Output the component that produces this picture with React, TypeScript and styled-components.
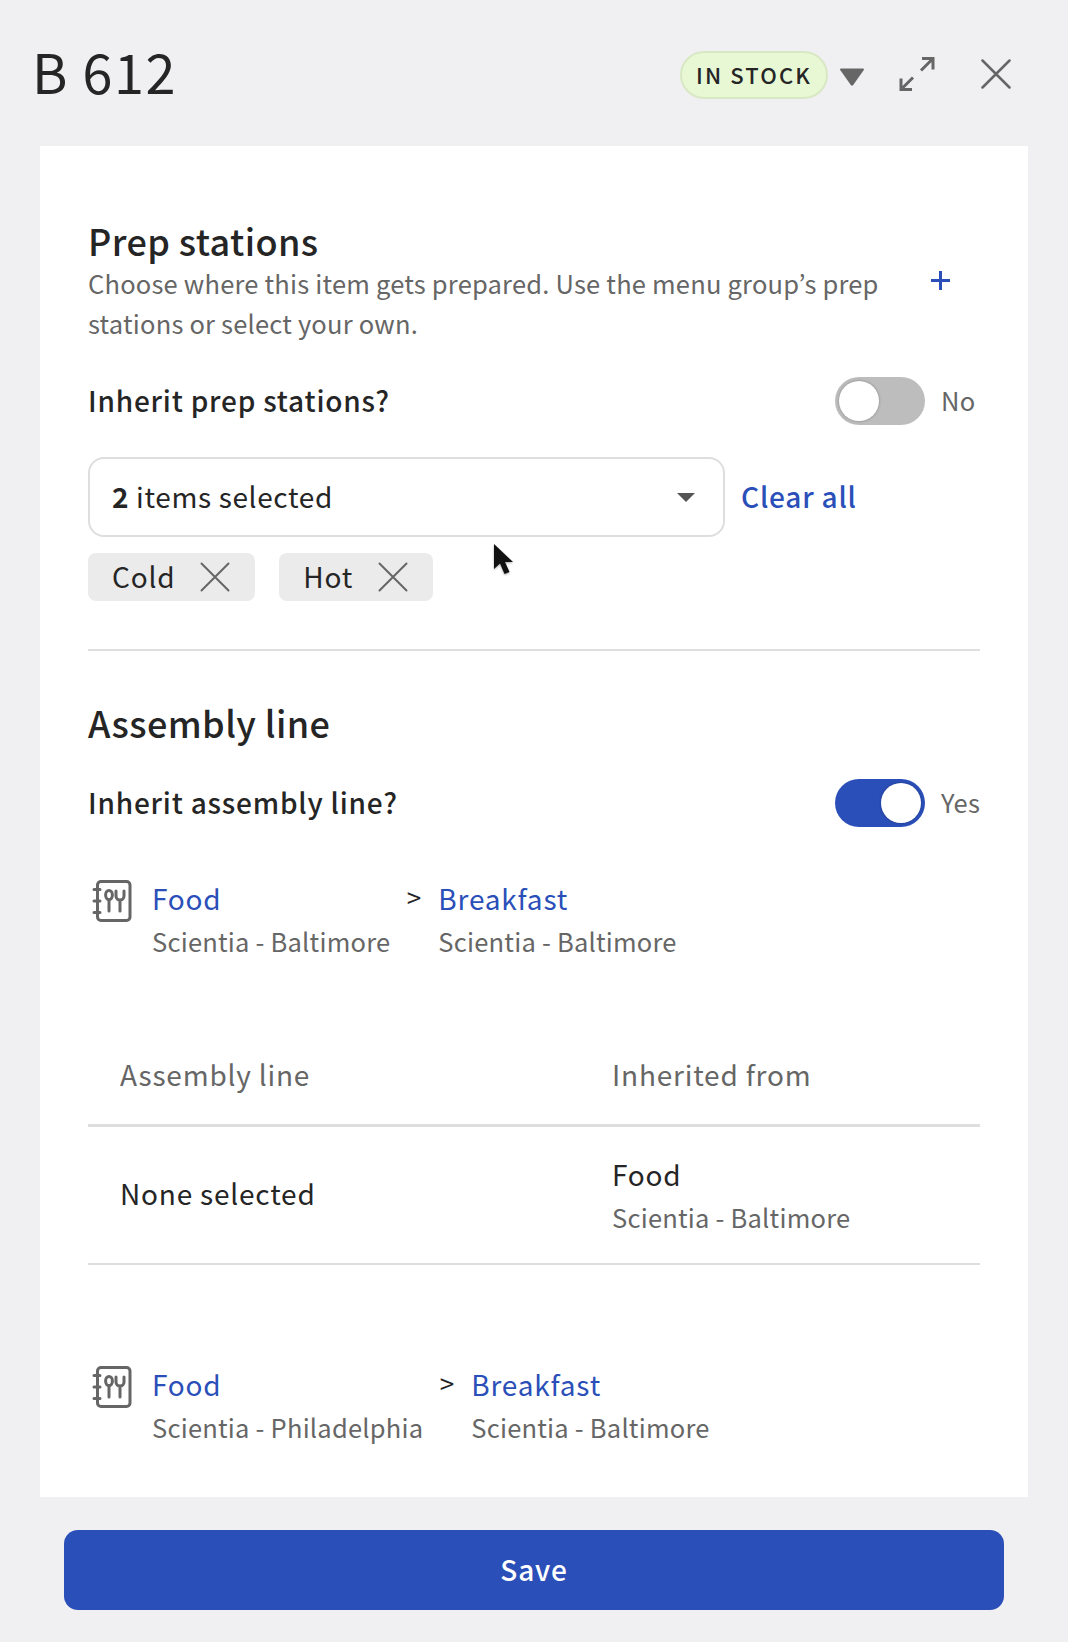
import React from 'react'
import styled, { createGlobalStyle } from 'styled-components'

const GlobalStyle = createGlobalStyle`
  html, body {
    margin: 0;
    padding: 0;
    background: #f0f0f2;
  }
  * {
    box-sizing: border-box;
  }
  body {
    font-family: "Noto Sans CJK JP", "Noto Sans", sans-serif;
    color: #252525;
    font-size: 28px;
    line-height: 40px;
    letter-spacing: 0.8px;
  }
`

const Page = styled.div`
  position: relative;
  width: 1068px;
  height: 1642px;
  display: flex;
  flex-direction: column;
  overflow: hidden;
`
const Header = styled.header`
  height: 146px;
  display: flex;
  align-items: center;
  padding: 2px 57px 0 32px;
`
const Title = styled.h1`
  flex: 1;
  margin: -7px 0 0;
  font-size: 54px;
  line-height: 60px;
  font-weight: 400;
  letter-spacing: 1.5px;
`
const StockBadge = styled.div`
  width: 148px;
  height: 48px;
  margin: 2px 0 0 1px;
  padding-bottom: 2px;
  display: flex;
  align-items: center;
  justify-content: center;
  border: 2px solid #d9e8c4;
  border-radius: 24px;
  background: #e8f7d4;
  font-size: 22px;
  font-weight: 500;
  letter-spacing: 2.1px;
`
const IconButton = styled.span<{ $gap: number; $top?: number }>`
  display: flex;
  align-items: center;
  justify-content: center;
  margin: ${(p) => p.$top ?? 0}px 0 0 ${(p) => p.$gap}px;
  color: #666;
`
const Panel = styled.main`
  width: 988px;
  height: 1351px;
  margin: 0 40px;
  padding: 68px 48px 0;
  background: #fff;
`
const SectionTitle = styled.h2<{ $top?: number }>`
  margin: ${(p) => p.$top ?? 0}px 0 0;
  font-size: 36px;
  line-height: 52px;
  font-weight: 500;
  letter-spacing: 0.4px;
`
const DescRow = styled.div`
  display: flex;
  justify-content: space-between;
  width: 892px;
  margin-top: -3px;
`
const Description = styled.p`
  margin: 0;
  width: 800px;
  color: #666;
  font-size: 25.5px;
  letter-spacing: 0.2px;
`
const PlusIcon = styled.span`
  display: flex;
  margin: 8px 30px 0 0;
  color: #2b4fb9;
`
const ToggleRow = styled.div<{ $top: number }>`
  display: flex;
  align-items: center;
  height: 48px;
  margin-top: ${(p) => p.$top}px;
`
const ToggleLabel = styled.div`
  flex: 1;
  font-weight: 500;
`
const Toggle = styled.div<{ $on: boolean }>`
  width: 90px;
  height: 48px;
  margin-top: 2px;
  padding: 4px;
  display: flex;
  justify-content: ${(p) => (p.$on ? 'flex-end' : 'flex-start')};
  border-radius: 24px;
  background: ${(p) => (p.$on ? '#2b4fb9' : '#bdbdbd')};
`
const Knob = styled.div`
  width: 40px;
  height: 40px;
  border-radius: 50%;
  background: #fff;
  box-shadow: 0 0 3px rgba(0, 0, 0, 0.3);
`
const ToggleValue = styled.div`
  width: 55px;
  padding-left: 16px;
  color: #666;
  font-size: 25.5px;
  letter-spacing: 0.2px;
  white-space: nowrap;
`
const SelectRow = styled.div`
  display: flex;
  align-items: center;
  margin-top: 33px;
`
const Select = styled.div`
  width: 637px;
  height: 80px;
  padding: 0 28px 0 22px;
  display: flex;
  align-items: center;
  justify-content: space-between;
  border: 2px solid #dedede;
  border-radius: 16px;
  letter-spacing: 0.65px;
`
const SelectText = styled.span`
  margin-top: -2px;
`
const SelectCount = styled.b`
  font-weight: 700;
`
const Caret = styled.span`
  width: 0;
  height: 0;
  border-left: 9px solid transparent;
  border-right: 9px solid transparent;
  border-top: 9px solid #555;
`
const ClearAll = styled.a`
  margin: -2px 0 0 16px;
  color: #2b4fb9;
  font-weight: 500;
`
const ChipRow = styled.div`
  display: flex;
  gap: 24px;
  margin-top: 16px;
`
const Chip = styled.div`
  height: 48px;
  display: flex;
  align-items: center;
  gap: 25px;
  padding: 0 25px 0 24px;
  border-radius: 8px;
  background: #ebebeb;
`
const ChipText = styled.span`
  margin-top: -2px;
`
const ChipClose = styled.span`
  display: flex;
  color: #666;
`
const Divider = styled.hr`
  height: 2px;
  margin: 48px 0 0;
  border: 0;
  background: #dedede;
`
const Crumbs = styled.div<{ $top: number }>`
  display: flex;
  align-items: flex-start;
  height: 88px;
  margin-top: ${(p) => p.$top}px;
`
const BookIcon = styled.span`
  display: flex;
  width: 64px;
  padding: 1px 0 0 3px;
  color: #666;
`
const Crumb = styled.div`
  display: flex;
  flex-direction: column;
  gap: 3px;
`
const CrumbLink = styled.a`
  color: #2b4fb9;
`
const SubText = styled.div`
  color: #666;
  font-size: 25.5px;
  letter-spacing: 0.22px;
`
const Chevron = styled.span`
  width: 48px;
  text-align: center;
  font-size: 26px;
  line-height: 38px;
`
const TableGrid = styled.div`
  display: grid;
  grid-template-columns: 492px 1fr;
  padding-left: 32px;
  align-items: center;
`
const TableHead = styled(TableGrid)`
  height: 90px;
  margin-top: 71px;
  border-bottom: 3px solid #dedede;
  padding-bottom: 14px;
  color: #666;
`
const TableRow = styled(TableGrid)`
  height: 138px;
  border-bottom: 2px solid #dedede;
`
const RowLabel = styled.span`
  margin-top: -5px;
`
const SaveBar = styled.div`
  flex: 1;
  padding: 33px 64px 0;
`
const SaveButton = styled.button`
  width: 940px;
  height: 80px;
  padding: 0 0 2px;
  border: 0;
  border-radius: 14px;
  background: #2b4fb9;
  color: #fff;
  font: inherit;
  font-weight: 500;
  letter-spacing: 0.8px;
`
const CursorMark = styled.svg`
  position: absolute;
  left: 493px;
  top: 541px;
  filter: drop-shadow(0 1px 1px rgba(0, 0, 0, 0.35));
`

const CloseGlyph = ({ size, stroke = 2.5 }: { size: number; stroke?: number }) => (
  <svg width={size} height={size} viewBox="0 0 30 30" fill="none" stroke="currentColor" strokeWidth={stroke} strokeLinecap="round">
    <path d="M1.5 1.5 28.5 28.5M28.5 1.5 1.5 28.5" />
  </svg>
)

const MenuBook = () => (
  <svg width="42" height="44" viewBox="0 0 42 44" fill="none" stroke="currentColor" strokeWidth="3" strokeLinecap="round" strokeLinejoin="round">
    <rect x="6.5" y="2.5" width="32.5" height="39" rx="3.5" />
    <path d="M3 10.5h6M3 22h6M3 33.5h6" />
    <ellipse cx="18" cy="16" rx="3.4" ry="4.6" />
    <path d="M18 21v11" />
    <path d="M25 12v5a4 4 0 0 0 8 0v-5M29 21v11" />
  </svg>
)

const App = () => (
  <Page>
    <GlobalStyle />
    <Header>
      <Title>B 612</Title>
      <StockBadge>IN STOCK</StockBadge>
      <IconButton $gap={11} $top={5}>
        <svg width="26" height="20" viewBox="0 0 26 20" fill="#666">
          <path d="M2 1.5h22a1 1 0 0 1 .8 1.6L14.2 18a1.5 1.5 0 0 1-2.4 0L1.2 3.1A1 1 0 0 1 2 1.5Z" />
        </svg>
      </IconButton>
      <IconButton $gap={34}>
        <svg width="36" height="36" viewBox="0 0 36 36" fill="none" stroke="currentColor" strokeWidth="3">
          <path d="M23 2.5h11v11M34 2.5 22 14.5M13 33.5H2v-11M2 33.5l12-12" />
        </svg>
      </IconButton>
      <IconButton $gap={46}>
        <CloseGlyph size={30} />
      </IconButton>
    </Header>
    <Panel>
      <SectionTitle>Prep stations</SectionTitle>
      <DescRow>
        <Description>Choose where this item gets prepared. Use the menu group’s prep stations or select your own.</Description>
        <PlusIcon>
          <svg width="19" height="19" viewBox="0 0 19 19" stroke="currentColor" strokeWidth="3">
            <path d="M9.5 0v19M0 9.5h19" />
          </svg>
        </PlusIcon>
      </DescRow>
      <ToggleRow $top={33}>
        <ToggleLabel>Inherit prep stations?</ToggleLabel>
        <Toggle $on={false}><Knob /></Toggle>
        <ToggleValue>No</ToggleValue>
      </ToggleRow>
      <SelectRow>
        <Select>
          <SelectText><SelectCount>2</SelectCount> items selected</SelectText>
          <Caret />
        </Select>
        <ClearAll>Clear all</ClearAll>
      </SelectRow>
      <ChipRow>
        <Chip><ChipText>Cold</ChipText><ChipClose><CloseGlyph size={30} stroke={2} /></ChipClose></Chip>
        <Chip><ChipText>Hot</ChipText><ChipClose><CloseGlyph size={30} stroke={2} /></ChipClose></Chip>
      </ChipRow>
      <Divider />
      <SectionTitle $top={45}>Assembly line</SectionTitle>
      <ToggleRow $top={30}>
        <ToggleLabel>Inherit assembly line?</ToggleLabel>
        <Toggle $on><Knob /></Toggle>
        <ToggleValue>Yes</ToggleValue>
      </ToggleRow>
      <Crumbs $top={52}>
        <BookIcon><MenuBook /></BookIcon>
        <Crumb>
          <CrumbLink>Food</CrumbLink>
          <SubText>Scientia - Baltimore</SubText>
        </Crumb>
        <Chevron>&gt;</Chevron>
        <Crumb>
          <CrumbLink>Breakfast</CrumbLink>
          <SubText>Scientia - Baltimore</SubText>
        </Crumb>
      </Crumbs>
      <TableHead>
        <span>Assembly line</span>
        <span>Inherited from</span>
      </TableHead>
      <TableRow>
        <RowLabel>None selected</RowLabel>
        <Crumb>
          <span>Food</span>
          <SubText>Scientia - Baltimore</SubText>
        </Crumb>
      </TableRow>
      <Crumbs $top={99}>
        <BookIcon><MenuBook /></BookIcon>
        <Crumb>
          <CrumbLink>Food</CrumbLink>
          <SubText>Scientia - Philadelphia</SubText>
        </Crumb>
        <Chevron>&gt;</Chevron>
        <Crumb>
          <CrumbLink>Breakfast</CrumbLink>
          <SubText>Scientia - Baltimore</SubText>
        </Crumb>
      </Crumbs>
    </Panel>
    <SaveBar>
      <SaveButton>Save</SaveButton>
    </SaveBar>
    <CursorMark width="24" height="38" viewBox="0 0 24 38">
      <path d="M1 3v25l6-5.500 4.500 10.500 5-2-4.500-10H20Z" fill="#111" />
    </CursorMark>
  </Page>
)

export default App
